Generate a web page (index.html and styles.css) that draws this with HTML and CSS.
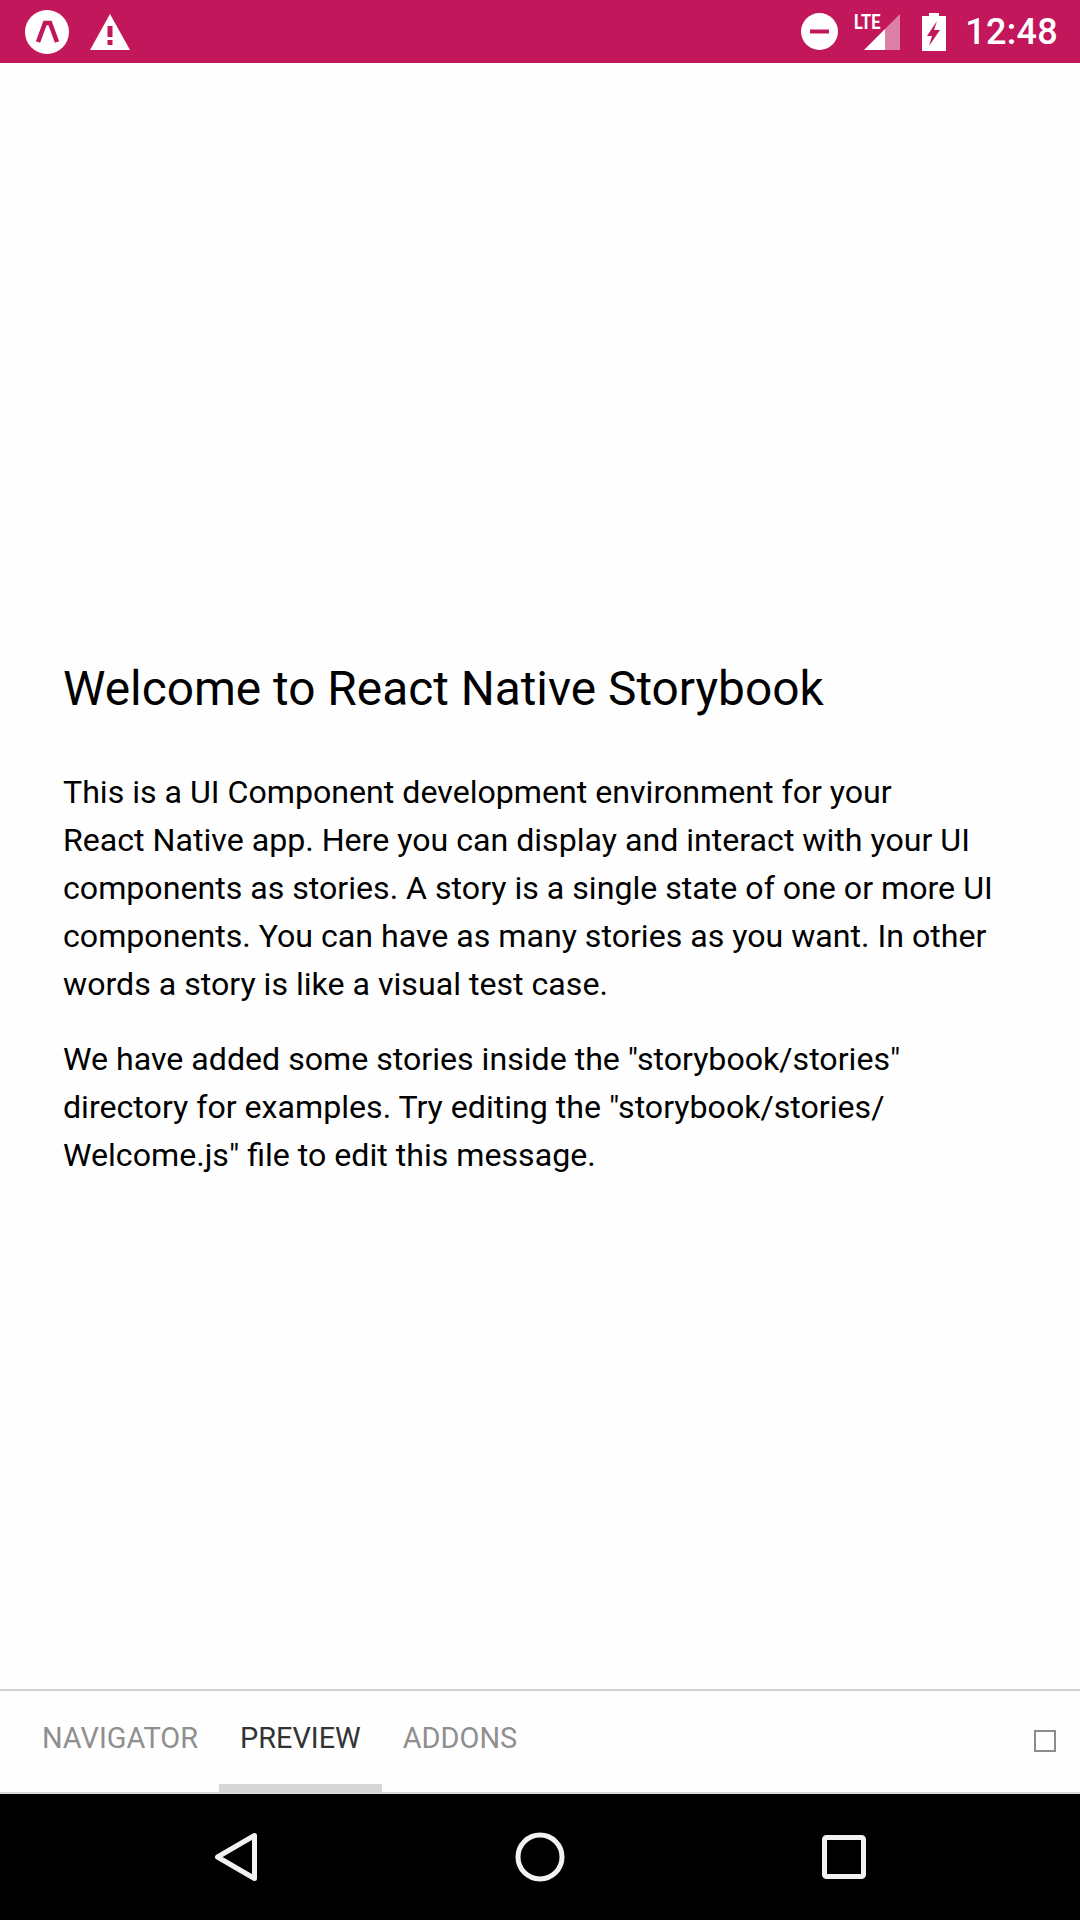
FILE: index.html
```html
<!DOCTYPE html>
<html lang="en">
<head>
<meta charset="utf-8">
<title>React Native Storybook</title>
<link rel="stylesheet" href="styles.css">
</head>
<body>
<div class="screen">
  <header class="status">
    <svg class="ico-expo" width="44" height="44" viewBox="0 0 44 44"><circle cx="22" cy="22" r="22" fill="#fff"/><path d="M13 32 L20 13 H25 L32 32" fill="none" stroke="#c2185b" stroke-width="4.5"/></svg>
    <svg class="ico-warn" width="40" height="36" viewBox="0 0 40 36"><path d="M20 0 L40 36 H0 Z" fill="#fff"/><rect x="17.500" y="12" width="5" height="11" fill="#c2185b"/><rect x="17.500" y="26" width="5" height="5" fill="#c2185b"/></svg>
    <span class="status-spacer"></span>
    <svg class="ico-dnd" width="37" height="37" viewBox="0 0 37 37"><circle cx="18.500" cy="18.500" r="18.500" fill="#fff"/><rect x="9" y="16.500" width="19" height="4" fill="#c2185b"/></svg>
    <span class="signal">
      <svg width="46" height="38" viewBox="0 0 46 38"><path d="M10 37 L31 16 V37 Z" fill="#fff"/><path d="M31 16 L46 1 V37 H31 Z" fill="#fff" fill-opacity=".45"/></svg>
      <span class="lte">LTE</span>
    </span>
    <svg class="ico-batt" width="24" height="38" viewBox="0 0 24 38"><path d="M7 0 H17 V3 H24 V38 H0 V3 H7 Z" fill="#fff"/><path d="M15 8 L5 23 H10 L7 33 L18 17 H12 Z" fill="#c2185b"/></svg>
    <span class="clock">12:48</span>
  </header>
  <main class="content">
    <h1 class="title">Welcome to React Native Storybook</h1>
    <p class="para">This is a UI Component development environment for your<br>React Native app. Here you can display and interact with your UI<br>components as stories. A story is a single state of one or more UI<br>components. You can have as many stories as you want. In other<br>words a story is like a visual test case.</p>
    <p class="para">We have added some stories inside the "storybook/stories"<br>directory for examples. Try editing the "storybook/stories/<br>Welcome.js" file to edit this message.</p>
  </main>
  <nav class="tabs">
    <span class="tab">NAVIGATOR</span>
    <span class="tab tab-active">PREVIEW</span>
    <span class="tab">ADDONS</span>
    <span class="tab-spacer"></span>
    <span class="tab-box"></span>
  </nav>
  <footer class="navbar">
    <span class="nav-cell"><svg width="46" height="52" viewBox="0 0 46 52"><path d="M4.500 26 L41.500 4.500 V47.500 Z" fill="none" stroke="#f2f2f2" stroke-width="5" stroke-linejoin="round"/></svg></span>
    <span class="nav-cell"><svg width="50" height="50" viewBox="0 0 50 50"><circle cx="25" cy="25" r="22" fill="none" stroke="#f2f2f2" stroke-width="5"/></svg></span>
    <span class="nav-cell"><svg width="44" height="44" viewBox="0 0 44 44"><rect x="2.500" y="2.500" width="39" height="39" rx="2" fill="none" stroke="#f2f2f2" stroke-width="5"/></svg></span>
  </footer>
</div>
</body>
</html>
```
FILE: styles.css
```css
* { box-sizing: border-box; }
html, body { margin: 0; padding: 0; }
body { font-family: Roboto, "Liberation Sans", sans-serif; background: #fefefe; }
.screen { width: 1080px; height: 1920px; display: flex; flex-direction: column; overflow: hidden; }

.status { height: 63px; flex: none; background: #c2185b; display: flex; align-items: center; padding: 0 22px 0 25px; color: #fff; }
.ico-expo { margin-right: 21px; }
.status-spacer { flex: 1; }
.signal { position: relative; display: flex; margin-left: 16px; }
.lte { position: absolute; left: 0; top: -3px; font-size: 21px; font-weight: 700; line-height: 24px; transform: scaleX(.78); transform-origin: left center; }
.ico-batt { margin-left: 22px; }
.clock { margin-left: 19px; font-size: 36px; font-weight: 500; line-height: 40px; letter-spacing: .3px; }

.content { flex: 1; padding: 598px 63px 0; color: #000; }
.title { margin: 0 0 51px; font-size: 47.8px; font-weight: 400; line-height: 56px; color: #000; }
.para { margin: 0 0 26px; font-size: 32.13px; line-height: 48px; }
.para + .para { margin-top: 27px; }

.tabs { height: 105px; flex: none; display: flex; align-items: stretch; padding: 0 24px 0 21px; border-top: 2px solid #d2d2d2; border-bottom: 2px solid #d8d8d8; }
.tab { padding: 0 21px; font-size: 28.9px; line-height: 95px; color: #8f8f8f; }
.tab-active { color: #333; box-shadow: inset 0 -8px 0 #d6d6d6; }
.tab-spacer { flex: 1; }
.tab-box { width: 22px; height: 22px; margin-top: 39px; border: 2px solid #8c8c8c; }

.navbar { height: 126px; flex: none; background: #000; display: flex; justify-content: center; align-items: center; }
.nav-cell { width: 304px; display: flex; justify-content: center; align-items: center; }
```
